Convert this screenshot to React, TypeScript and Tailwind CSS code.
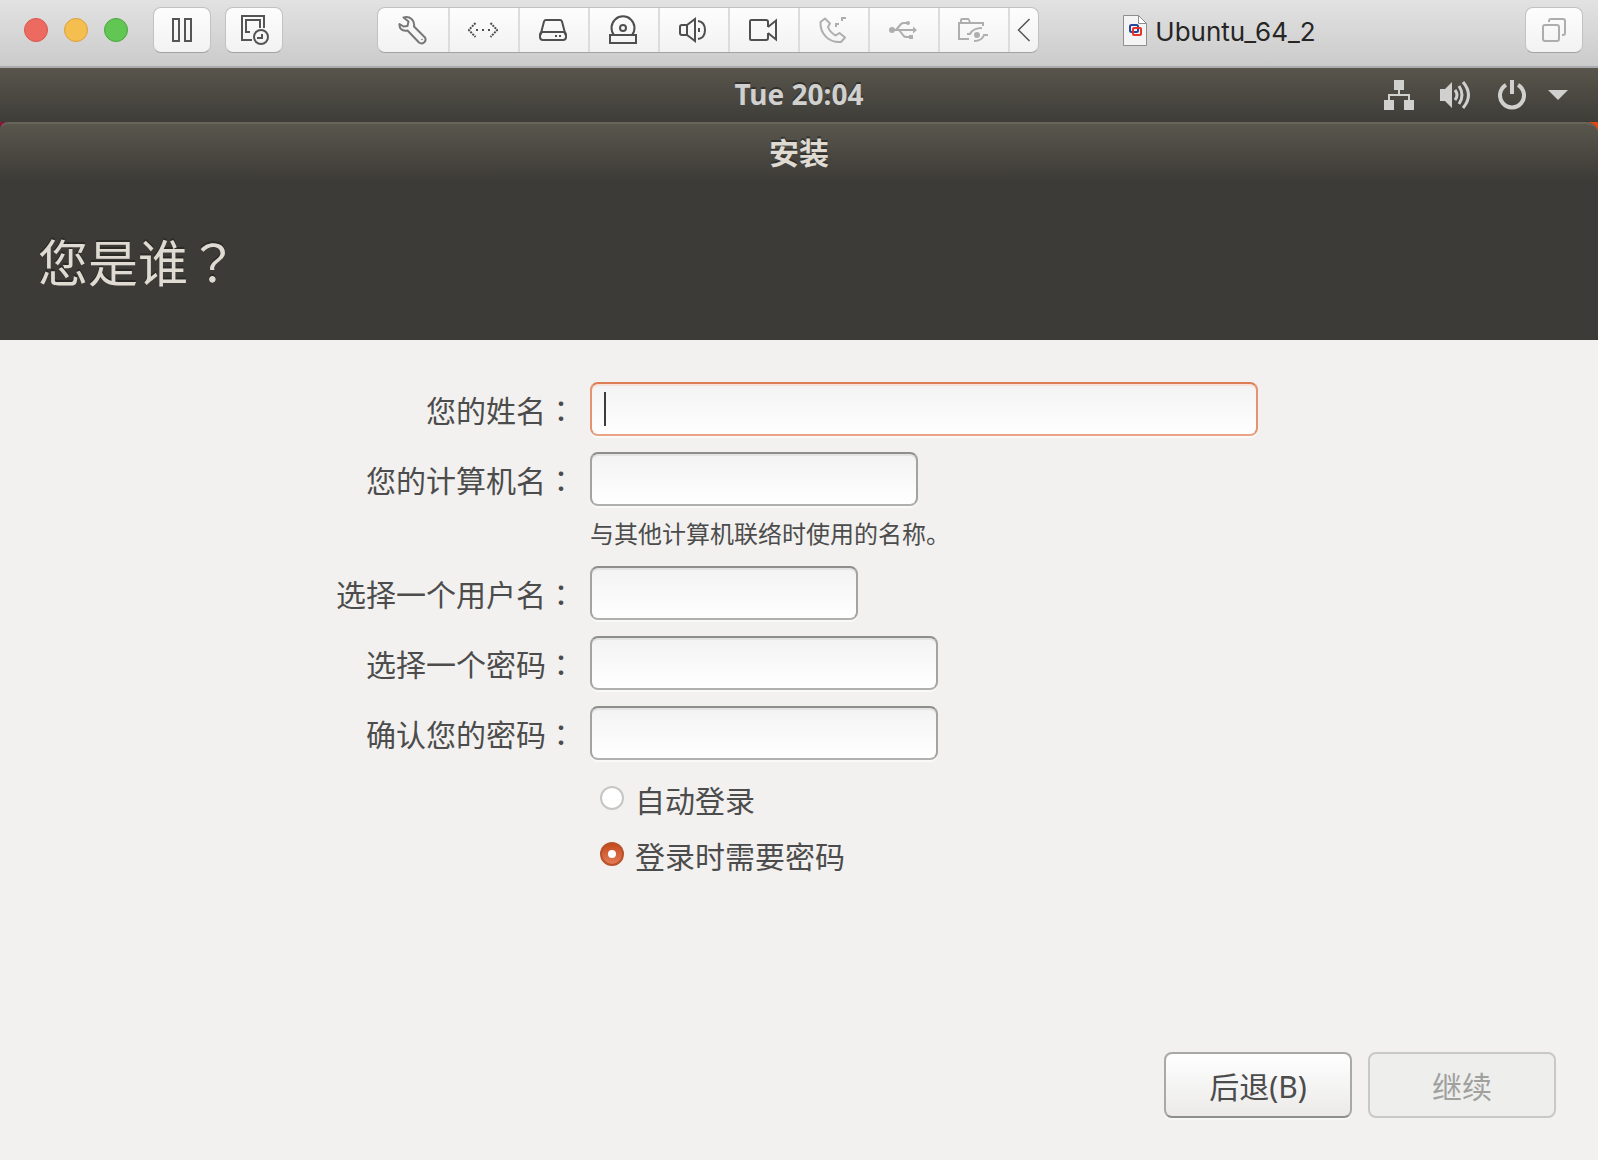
import { useState, type ReactNode } from 'react';

const toolButton =
  'flex h-[46px] w-[58px] items-center justify-center rounded-lg border border-[#c2c2c2] border-b-[#a3a3a3] bg-linear-to-b from-[#fdfdfd] to-[#f2f2f2]';

const field =
  'h-[54px] rounded-lg border-2 border-[#a3a3a2] border-t-[#8e8e8d] border-b-[#b0b0af] bg-linear-to-b from-[#f3f3f3] to-white px-3 text-[30px] text-[#3c3c3c] shadow-[0_2px_0_#f9f9f8,inset_0_2px_0_#e4e4e4] outline-none';

const radio =
  "relative h-6 w-6 shrink-0 appearance-none rounded-full border-2 border-[#c6c6c4] bg-white checked:border-[#b9522a] checked:bg-linear-to-b checked:from-[#c64a1c] checked:to-[#e27c55] checked:after:absolute checked:after:inset-0 checked:after:m-auto checked:after:h-2 checked:after:w-2 checked:after:rounded-full checked:after:bg-white checked:after:content-['']";

const strokeProps = {
  fill: 'none',
  stroke: 'currentColor',
  strokeWidth: 2,
};

const devices: { label: string; disabled?: boolean; icon: ReactNode }[] = [
  {
    label: 'Settings',
    icon: (
      <svg width="30" height="30" viewBox="0 0 30 30" {...strokeProps} className="text-[#777]">
        <path d="M5.500 2.500 10.500 6.500 9.500 11 5.500 11.500 1.500 9C1 13.500 4 16.500 9.500 15.500L21 27.500C24.500 30 29 26.500 27 22.500L16 11.500C17 5.500 12 .500 5.500 2.500Z" strokeLinejoin="round" />
        <circle cx="24" cy="24.500" r=".8" fill="currentColor" stroke="none" />
      </svg>
    ),
  },
  {
    label: 'Network adapter',
    icon: (
      <svg width="30" height="16" viewBox="0 0 30 16" {...strokeProps}>
        <path d="M7.500 1 .8 8l6.700 7M22.500 1l6.700 7-6.700 7" strokeDasharray="2 1" />
        <path d="M8 8h2M14 8h2M20 8h2" />
      </svg>
    ),
  },
  {
    label: 'Hard disk',
    icon: (
      <svg width="28" height="24" viewBox="0 0 28 24" {...strokeProps}>
        <path d="M1.500 17 5 3.500Q5.500 2 7 2h14q1.500 0 2 1.500L26.500 17" />
        <rect x="1" y="14" width="26" height="8" rx="3" />
        <path d="M16 18h2M20 18h2" />
      </svg>
    ),
  },
  {
    label: 'CD/DVD',
    icon: (
      <svg width="28" height="30" viewBox="0 0 28 30" {...strokeProps}>
        <path d="M5 20a11.500 11.500 0 1 1 18 0" />
        <circle cx="14" cy="13" r="3" />
        <path d="M1 20h26v8H1z" />
      </svg>
    ),
  },
  {
    label: 'Sound',
    icon: (
      <svg width="28" height="26" viewBox="0 0 28 26" {...strokeProps}>
        <path d="M8 8v10M8 8H3Q1 8 1 10v6q0 2 2 2h5l8 6V2Z" />
        <path d="M19 4q7 1 7 9t-7 9" />
        <path d="M20 11v4" />
      </svg>
    ),
  },
  {
    label: 'Camera',
    icon: (
      <svg width="30" height="24" viewBox="0 0 30 24" {...strokeProps}>
        <path d="M20 9V4q0-2-2-2H3Q2 2 2 3.500v17Q2 22 3.500 22H18q2 0 2-2v-5M20 9l8-6.500v19L20 15" />
      </svg>
    ),
  },
  {
    label: 'Phone',
    disabled: true,
    icon: (
      <svg width="28" height="28" viewBox="0 0 28 28" {...strokeProps}>
        <path d="M6 2.500 1.500 6C1 18 10 27 22 26l4-4.500-5.500-4.500-4 2.500C12.500 17 10 14 9 11l2-3.500Z" strokeLinejoin="round" />
        <path d="M17 11V8h3M23 5V2h4" />
      </svg>
    ),
  },
  {
    label: 'USB',
    disabled: true,
    icon: (
      <svg width="28" height="20" viewBox="0 0 28 20" {...strokeProps}>
        <path d="M3 10h22M7 10l5-6q1-1 3-1h3M10 10l4 5q1 2 3 2h5" />
        <circle cx="3" cy="10" r="3" fill="currentColor" stroke="none" />
        <circle cx="19" cy="3" r="2" fill="currentColor" stroke="none" />
        <path d="M20 15h4v4h-4zM24 6.500 28 10l-4 3.500z" fill="currentColor" stroke="none" />
      </svg>
    ),
  },
  {
    label: 'Shared folder',
    disabled: true,
    icon: (
      <svg width="32" height="26" viewBox="0 0 32 26" {...strokeProps}>
        <path d="M12 22H2V6h24v3M4 6V3q0-1 1-1h6q1 0 2 4" />
        <circle cx="20" cy="18" r="3" fill="currentColor" stroke="none" />
        <path d="M10 17h3q3-6 12-6M31 18h-4q-2 6-10 6" />
      </svg>
    ),
  },
];

function VmToolbar() {
  return (
    <header className="flex items-start border-b-2 border-[#aaacaf] bg-linear-to-b from-[#e2e2e2] to-[#cbcbcb] pt-[7px] pr-[15px] pb-[13px] pl-6">
      <div className="flex h-[46px] items-center gap-4">
        <button aria-label="Close" className="h-6 w-6 rounded-full border border-[#d9574c] bg-[#ec6a5f]" />
        <button aria-label="Minimize" className="h-6 w-6 rounded-full border border-[#dba03b] bg-[#f5bf4f]" />
        <button aria-label="Zoom" className="h-6 w-6 rounded-full border border-[#4aa73c] bg-[#61c654]" />
      </div>

      <div className="ml-[25px] flex gap-[14px] text-[#555]">
        <button aria-label="Pause" className={toolButton}>
          <svg width="20" height="24" viewBox="0 0 20 24" {...strokeProps}>
            <path d="M1 1h6v22H1zM13 1h6v22h-6z" />
          </svg>
        </button>
        <button aria-label="Snapshots" className={`${toolButton} pl-[2px]`}>
          <svg width="30" height="30" viewBox="0 0 30 30" {...strokeProps}>
            <path d="M12 25H2V1h22v12M10 17H6V5h14v8" />
            <circle cx="21" cy="22" r="7" />
            <path d="M22 19v4h-5" />
          </svg>
        </button>
      </div>

      <div className="ml-[94px] flex h-[46px] overflow-hidden rounded-lg border border-[#c2c2c2] border-b-[#a3a3a3] bg-linear-to-b from-[#fdfdfd] to-[#f2f2f2]">
        {devices.map((device) => (
          <button
            key={device.label}
            aria-label={device.label}
            disabled={device.disabled}
            className="flex w-[70px] items-center justify-center border-r-2 border-[#dcdcdc] pr-[3px] text-[#4f4f4f] first:w-[72px] first:pr-0 disabled:text-[#aeaeae]"
          >
            {device.icon}
          </button>
        ))}
        <button aria-label="Collapse" className="flex w-7 items-center justify-center text-[#555]">
          <svg width="14" height="24" viewBox="0 0 14 24" fill="none" stroke="currentColor" strokeWidth="1.500">
            <path d="M12.500 1 1.500 12l11 11" />
          </svg>
        </button>
      </div>

      <div className="flex h-[46px] flex-1 items-center justify-center gap-2 pt-[2px] pr-[125px]">
        <svg width="24" height="32" viewBox="0 0 24 32" fill="none">
          <path d="M.500.500h15l8 8v22H.500z" fill="#f4f4f4" stroke="#8e8e8e" />
          <path d="M15.500.500v8h8z" fill="#fff" stroke="#8e8e8e" />
          <rect x="7" y="10" width="8" height="7" rx="1.500" stroke="#24479a" strokeWidth="2" />
          <rect x="10" y="13" width="8" height="7" rx="1" stroke="#e8322a" strokeWidth="2" />
        </svg>
        <h1 className="font-[Inter,sans-serif] text-[26px] text-[#262626]">Ubuntu_64_2</h1>
      </div>

      <button aria-label="Windows" className={toolButton}>
        <svg width="24" height="24" viewBox="0 0 24 24" {...strokeProps} className="text-[#adadad]">
          <rect x="1" y="7" width="16" height="16" rx="2" />
          <path d="M7 4V3q0-2 2-2h12q2 0 2 2v12q0 2-2 2h-1" />
        </svg>
      </button>
    </header>
  );
}

function TopBar() {
  return (
    <div className="grid h-[54px] grid-cols-[1fr_auto_1fr] items-center bg-linear-to-b from-[#59554c] to-[#3e3d38] text-[#d0d0cf]">
      <time className="col-start-2 pb-[2px] font-['Noto_Sans',sans-serif] text-[28px] leading-10 font-bold [text-shadow:0_-2px_0_#33322e]">Tue 20:04</time>
      <button aria-label="System menu" className="mr-[30px] flex items-center justify-self-end">
        <svg width="30" height="30" viewBox="0 0 30 30" fill="currentColor">
          <path d="M10 0h10v10h-4v4h10v6h4v10H20V20h4v-4H6v4h4v10H0V20h4v-6h10v-4h-4z" />
        </svg>
        <svg width="32" height="30" viewBox="0 0 32 30" fill="none" stroke="currentColor" strokeWidth="3" className="ml-[26px]">
          <path d="M0 9h5l7-7v26l-7-7H0z" fill="currentColor" stroke="none" />
          <path d="M15 10q4 5 0 10M19 6q6 9 0 18M23 2q11 13 0 26" />
        </svg>
        <svg width="28" height="30" viewBox="0 0 28 30" fill="none" stroke="currentColor" strokeWidth="4" className="ml-[26px]">
          <path d="M8 5a12 12 0 1 0 12 0M14 0v14" />
        </svg>
        <svg width="20" height="10" viewBox="0 0 20 10" fill="currentColor" className="ml-[22px]">
          <path d="M0 0h20L10 10z" />
        </svg>
      </button>
    </div>
  );
}

interface FormRowProps {
  id: string;
  label: string;
  children: ReactNode;
}

function FormRow({ id, label, children }: FormRowProps) {
  return (
    <>
      <label htmlFor={id} className="h-[54px] pt-[2px] leading-[50px]">
        {label}
        <span className="font-['Noto_Sans_CJK_TC',sans-serif]">：</span>
      </label>
      {children}
    </>
  );
}

export default function App() {
  const [login, setLogin] = useState('password');

  return (
    <div className="flex min-h-screen flex-col bg-[#f2f1ef] font-['Noto_Sans','Noto_Sans_CJK_SC',sans-serif] text-[30px] text-[#4c4c4c]">
      <VmToolbar />
      <TopBar />

      {/* Window title and page heading */}
      <div className="bg-linear-to-r from-[#8d1238] to-[#dd4814]">
        <div className="rounded-tl-lg rounded-tr-xl bg-[#3d3b37] text-[#dfdbd2]">
          <h2 className="flex h-[60px] items-center justify-center rounded-tl-lg rounded-tr-xl border-t-2 border-[#68645a] bg-linear-to-b from-[#59564d] to-[#3d3b37] pb-[2px] text-[30px] font-bold [text-shadow:0_-2px_0_#33322e]">
            安装
          </h2>
          <h3 className="h-[158px] px-[38px] pt-[43px] text-[50px] leading-[70px] [text-shadow:0_-2px_0_#2b2a27]">
            您是谁<span className="font-['Noto_Sans_CJK_TC',sans-serif]">？</span>
          </h3>
        </div>
      </div>

      <main className="flex flex-1 flex-col pt-[42px]">
        <form className="mx-auto grid grid-cols-[auto_672px] items-start justify-items-start gap-x-[14px] gap-y-4 *:[label]:justify-self-end">
          <FormRow id="fullname" label="您的姓名">
            <div className="relative">
              <input
                id="fullname"
                type="text"
                className="block h-[54px] w-[668px] rounded-lg border-2 border-[#e3936f] border-t-[#dc7d54] border-b-[#eba387] bg-linear-to-b from-[#f3f3f3] to-white px-3 text-[30px] caret-transparent shadow-[0_2px_0_#f9f9f8,inset_0_2px_0_#f7e2d9] outline-none"
              />
              <span className="pointer-events-none absolute top-[10px] left-[14px] h-[34px] w-[2px] bg-[#3c3c3c]" />
            </div>
          </FormRow>

          <FormRow id="hostname" label="您的计算机名">
            <div>
              <input id="hostname" type="text" className={`${field} block w-[328px]`} />
              <p className="mt-3 text-[24px] leading-8">与其他计算机联络时使用的名称。</p>
            </div>
          </FormRow>

          <FormRow id="username" label="选择一个用户名">
            <input id="username" type="text" className={`${field} w-[268px]`} />
          </FormRow>

          <FormRow id="password" label="选择一个密码">
            <input id="password" type="password" className={`${field} w-[348px]`} />
          </FormRow>

          <FormRow id="confirm" label="确认您的密码">
            <input id="confirm" type="password" className={`${field} w-[348px]`} />
          </FormRow>

          <div className="col-start-2 -mt-1.5 pl-[10px]">
            <label className="flex h-14 items-center gap-[11px]">
              <input type="radio" name="login" className={radio} checked={login === 'auto'} onChange={() => setLogin('auto')} />
              <span className="pt-1">自动登录</span>
            </label>
            <label className="flex h-14 items-center gap-[11px]">
              <input type="radio" name="login" className={radio} checked={login === 'password'} onChange={() => setLogin('password')} />
              <span className="pt-1">登录时需要密码</span>
            </label>
          </div>
        </form>

        <div className="mt-auto flex justify-end gap-4 px-[42px] pb-[42px]">
          <button className="h-[66px] w-[188px] rounded-lg border-2 border-[#a9a9a8] border-b-[#8f8f8e] bg-linear-to-b from-white to-[#ebeae9] pt-[2px] shadow-[0_2px_0_#f7f7f6]">
            后退(B)
          </button>
          <button disabled className="h-[66px] w-[188px] rounded-lg border-2 border-[#c8c8c7] bg-[#eeeeed] pt-[2px] text-[#a0a09f]">
            继续
          </button>
        </div>
      </main>
    </div>
  );
}
